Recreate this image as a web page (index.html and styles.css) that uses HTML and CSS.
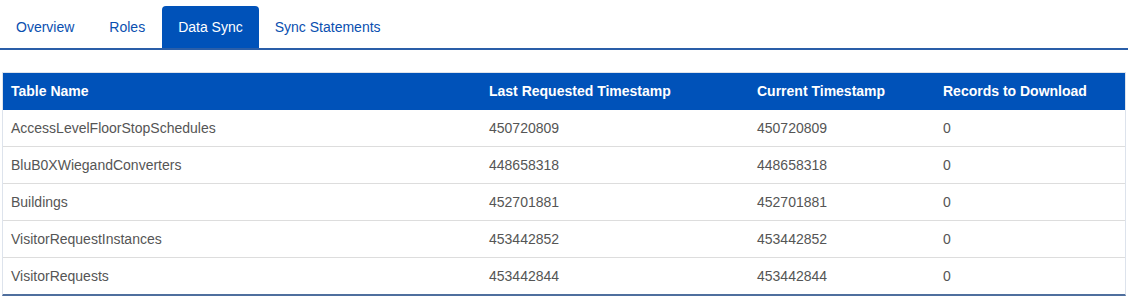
FILE: index.html
```html
<!DOCTYPE html>
<html lang="en">
<head>
  <meta charset="UTF-8">
  <title>Data Sync</title>
  <link rel="stylesheet" href="styles.css">
</head>
<body>
  <ul class="tabs">
    <li class="tab"><a href="#">Overview</a></li>
    <li class="tab"><a href="#">Roles</a></li>
    <li class="tab active"><a href="#">Data Sync</a></li>
    <li class="tab"><a href="#">Sync Statements</a></li>
  </ul>

  <div class="panel">
    <table class="sync-table">
      <colgroup>
        <col class="col-name">
        <col class="col-last">
        <col class="col-current">
        <col>
      </colgroup>
      <thead>
        <tr>
          <th>Table Name</th>
          <th>Last Requested Timestamp</th>
          <th>Current Timestamp</th>
          <th>Records to Download</th>
        </tr>
      </thead>
      <tbody>
        <tr><td>AccessLevelFloorStopSchedules</td><td>450720809</td><td>450720809</td><td>0</td></tr>
        <tr><td>BluB0XWiegandConverters</td><td>448658318</td><td>448658318</td><td>0</td></tr>
        <tr><td>Buildings</td><td>452701881</td><td>452701881</td><td>0</td></tr>
        <tr><td>VisitorRequestInstances</td><td>453442852</td><td>453442852</td><td>0</td></tr>
        <tr><td>VisitorRequests</td><td>453442844</td><td>453442844</td><td>0</td></tr>
      </tbody>
    </table>
  </div>
</body>
</html>
```

FILE: styles.css
```css
* {
  margin: 0;
  padding: 0;
  box-sizing: border-box;
}
body {
  font-family: "Liberation Sans", Arial, sans-serif;
  font-size: 14px;
  color: #555;
  background: #fff;
}
.tabs {
  list-style: none;
  display: flex;
  padding-top: 6px;
  border-bottom: 2px solid #2a5ea8;
}
.tab a {
  display: block;
  padding: 13px 16px;
  line-height: 16px;
  color: #0a4fb0;
  text-decoration: none;
  border-radius: 4px 4px 0 0;
}
.tab:first-child a {
  padding-right: 17px;
}
.tab:nth-child(2) a {
  padding-left: 18px;
  padding-right: 17px;
}
.tab.active a {
  background: #0052b9;
  color: #fff;
}
.panel {
  margin: 22px 2px 0;
  border: 1px solid #dde3ec;
  border-bottom: 2px solid #4f6f9e;
}
.sync-table {
  width: 100%;
  border-collapse: collapse;
  table-layout: fixed;
}
.col-name {
  width: 478px;
}
.col-last {
  width: 268px;
}
.col-current {
  width: 186px;
}
.sync-table th {
  background: #0052b9;
  color: #fff;
  font-weight: bold;
  text-align: left;
  padding: 10px 8px 11px;
  line-height: 16px;
}
.sync-table td {
  padding: 10px 8px;
  line-height: 16px;
  border-top: 1px solid #dddddd;
}
.sync-table tbody tr:first-child td {
  border-top: none;
}
```
